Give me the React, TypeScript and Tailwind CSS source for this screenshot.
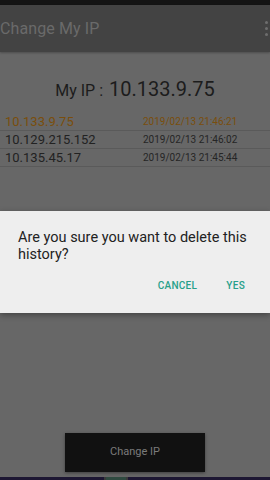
import React from 'react'

const HISTORY = [
  { ip: '10.133.9.75', time: '2019/02/13 21:46:21', current: true },
  { ip: '10.129.215.152', time: '2019/02/13 21:46:02', current: false },
  { ip: '10.135.45.17', time: '2019/02/13 21:45:44', current: false },
]

export default function App() {
  return (
    <div className="relative w-[270px] h-[480px] overflow-hidden bg-[#676767] flex flex-col font-['Roboto',sans-serif]">
      {/* status bar */}
      <div className="h-[5px] bg-[#141414]" />

      {/* app bar */}
      <div className="h-[47px] bg-[#434343] flex items-center justify-between shadow-[0_1px_2px_rgba(0,0,0,0.25)]">
        <span className="text-[16px] text-[#6a6a6a] tracking-[0.1px]">Change My IP</span>
        <div className="flex flex-col gap-[3px] mr-[2px]">
          <span className="w-[3px] h-[3px] rounded-full bg-[#6e6e6e]" />
          <span className="w-[3px] h-[3px] rounded-full bg-[#6e6e6e]" />
          <span className="w-[3px] h-[3px] rounded-full bg-[#6e6e6e]" />
        </div>
      </div>

      {/* current ip */}
      <div className="mt-[22px] flex items-baseline justify-center gap-[6px] text-[#1c1c1c]">
        <span className="text-[16px]">My IP :</span>
        <span className="text-[20px]">10.133.9.75</span>
      </div>

      {/* history list */}
      <div className="mt-[9px]">
        {HISTORY.map(h => (
          <div key={h.time} className="h-[18px] flex items-center border-b border-[#5a5a5a]">
            <span className={`w-[143px] pl-[5px] text-[13px] ${h.current ? 'text-[#7a4e0c]' : 'text-[#222]'}`}>{h.ip}</span>
            <span className={`text-[10px] ${h.current ? 'text-[#7a4e0c]' : 'text-[#252525]'}`}>{h.time}</span>
          </div>
        ))}
      </div>

      <div className="flex-1" />

      {/* bottom button */}
      <div className="flex justify-center mb-[5px]">
        <button className="w-[140px] h-[39px] bg-[#111] text-[#7b7b7b] text-[11px] shadow-[0_1px_3px_rgba(0,0,0,0.4)]">
          Change IP
        </button>
      </div>
      <div className="h-[3px] flex gap-[2px] bg-[#3a3a3a]">
        <div className="w-[104px] bg-[#1d1733]" />
        <div className="w-[20px] bg-[#2f4a40]" />
        <div className="flex-1 bg-[#1d1733]" />
      </div>

      {/* confirm dialog */}
      <div className="absolute left-0 right-0 top-[211px] h-[102px] bg-[#eeeeee] shadow-[0_2px_6px_rgba(0,0,0,0.35)] flex flex-col">
        <p className="pl-[18px] pr-[20px] pt-[18px] text-[14.5px] leading-[17px] text-[#222]">
          Are you sure you want to delete this history?
        </p>
        <div className="flex-1" />
        <div className="flex justify-end gap-[29px] pr-[25px] pb-[20px] text-[10px] font-medium text-[#27a08a] tracking-[0.3px]">
          <span>CANCEL</span>
          <span>YES</span>
        </div>
      </div>
    </div>
  )
}
